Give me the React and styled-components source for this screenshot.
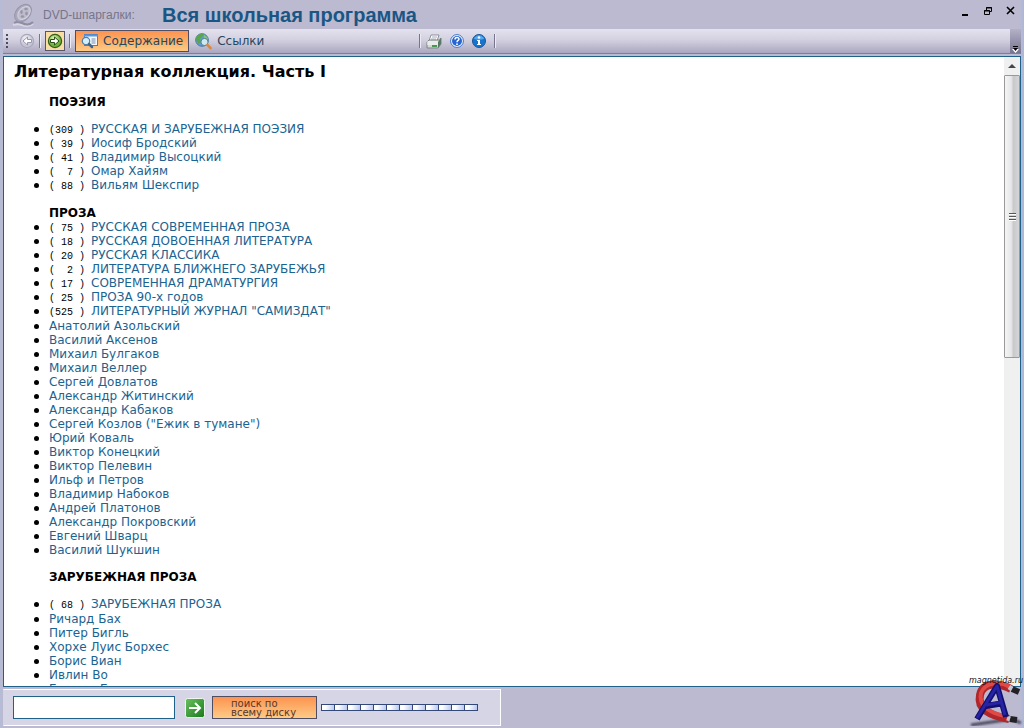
import React from 'react';
import styled, { createGlobalStyle } from 'styled-components';

const GlobalStyle = createGlobalStyle`
  * { box-sizing: border-box; }
  body { margin: 0; background: #bcbad0; }
  button, input { font: inherit; margin: 0; }
`;

const Shell = styled.div`
  display: flex;
  flex-direction: column;
  height: 100vh;
  padding: 0 3px 2px;
  overflow: hidden;
  position: relative;
  background: linear-gradient(90deg, #b4bcd6 0, #bcbad0 4px, #bcbad0 calc(100% - 4px), #a9b8dc 100%);
`;

const TitleBar = styled.header`
  display: flex;
  align-items: center;
  flex: none;
  height: 29px;
  padding: 0 4px 0 8px;
  font-family: "Liberation Sans", Arial, sans-serif;
`;

const Product = styled.span`
  width: 127px;
  padding-left: 8px;
  font-size: 12px;
  color: #77758a;
  white-space: nowrap;
`;

const Title = styled.h1`
  flex: 1;
  margin: 0;
  font-size: 20px;
  line-height: 28px;
  color: #1a5684;
`;

const WindowButtons = styled.div`
  display: flex;
  gap: 12px;
  padding-bottom: 8px;
`;

const PlainButton = styled.button`
  display: flex;
  align-items: center;
  justify-content: center;
  flex: none;
  padding: 0;
  border: 0;
  background: none;
`;

const ToolBar = styled.nav`
  display: flex;
  flex: none;
  height: 25px;
  border-bottom: 1px solid #7f7d9c;
  background: linear-gradient(#e4e2ee, #d3d1e0 45%, #aaa6c0);
  font-family: "DejaVu Sans", Verdana, sans-serif;
`;

const ToolGroup = styled.div`
  display: flex;
  align-items: center;
  width: ${(p) => p.$width || 'auto'};
  gap: ${(p) => p.$gap || '0'};
  flex: ${(p) => (p.$fill ? '1' : 'none')};
`;

const Grip = styled.span`
  width: 2px;
  height: 15px;
  margin: 0 11px 0 3px;
  background: repeating-linear-gradient(#4c4a62 0 2px, transparent 2px 4px);
`;

const Divider = styled.span`
  width: 2px;
  height: 14px;
  border-left: 1px solid #77758e;
  border-right: 1px solid #eceaf4;
`;

const Forward = styled(PlainButton)`
  width: 20px;
  height: 20px;
  border: 1px solid #57566c;
  background: #f8dda4;
`;

const TabButton = styled.button`
  display: flex;
  align-items: center;
  gap: 5px;
  height: 22px;
  padding: 0 5px;
  border: 1px solid ${(p) => (p.$active ? '#4f4d62' : 'transparent')};
  background: ${(p) => (p.$active ? 'linear-gradient(#fd9350, #fdae67 50%, #fecb86)' : 'none')};
  color: #25475f;
  font-size: 12px;
  line-height: 20px;
  white-space: nowrap;
`;

const Overflow = styled(PlainButton)`
  align-items: flex-end;
  width: 11px;
  background: linear-gradient(#b3b0c8, #77748f);
`;

const Panel = styled.main`
  display: flex;
  flex: 1;
  min-height: 0;
  margin-top: 2px;
  border: 1px solid #1f6189;
  background: #fff;
`;

const Content = styled.div`
  flex: 1;
  overflow: hidden;
  padding: 5px 10px 0;
  font-family: "DejaVu Sans", Verdana, sans-serif;
  font-size: 12px;
  line-height: 14px;
  color: #000;
`;

const PageHeading = styled.h2`
  margin: 0;
  font-size: 16px;
  line-height: 20px;
`;

const SectionHeading = styled.h3`
  margin: ${(p) => (p.$tight ? '14px 0 0 35px' : '13px 0 13px 35px')};
  font-size: 12px;
  line-height: 14px;
`;

const List = styled.ul`
  margin: 0;
  padding: 0 0 0 19px;
  list-style: none;
`;

const Item = styled.li`
  display: flex;
  align-items: center;
  height: 14px;
  margin-bottom: ${(p) => (p.$last ? '1px' : '0')};
  white-space: pre;

  &::before {
    content: "";
    width: 5px;
    height: 5px;
    margin: 0 10px 0 1px;
    border-radius: 50%;
    background: #000;
  }
`;

const Count = styled.span`
  padding-top: 3px;
  font: 10px/11px "Liberation Mono", "Courier New", monospace;
`;

const Link = styled.a`
  color: #1b6391;
  text-decoration: none;
`;

const ScrollTrack = styled.div`
  display: flex;
  flex-direction: column;
  flex: none;
  width: 16px;
  background: #f0f0f0;
`;

const ScrollUp = styled(PlainButton)`
  height: 18px;
`;

const Thumb = styled.div`
  display: flex;
  align-items: center;
  justify-content: center;
  height: 45%;
  border: 1px solid #999;
  border-radius: 1px;
  background: linear-gradient(90deg, #f5f5f5, #e6e6e8 45%, #c9c9cd 60%, #d6d6d8);
`;

const ThumbGrip = styled.span`
  width: 7px;
  height: 8px;
  background: repeating-linear-gradient(#55555a 0 1px, #fff 1px 2px, #d2d2d4 2px 3px);
`;

const Footer = styled.footer`
  flex: none;
  height: 39px;
  padding-top: 2px;
`;

const SearchBar = styled.form`
  display: flex;
  align-items: center;
  width: 498px;
  max-width: 100%;
  height: 37px;
  padding: 0 9px;
  border: 1px solid #fff;
  border-left-color: #d5d5e4;
  background: #d5d5e5;
`;

const SearchInput = styled.input`
  width: 162px;
  height: 23px;
  padding: 0 4px;
  border: 1px solid #1f6189;
  background: #fff;
  font: 12px "DejaVu Sans", sans-serif;
`;

const Go = styled(PlainButton)`
  margin: 0 7px 0 10px;
`;

const DiskButton = styled.button`
  width: 105px;
  height: 23px;
  padding: 0 0 0 18px;
  border: 1px solid #4f4d62;
  background: linear-gradient(#fd9350, #fecb86);
  color: #54382e;
  font: 10px/9px "DejaVu Sans", Verdana, sans-serif;
  text-align: left;
  white-space: nowrap;
`;

const Progress = styled.div`
  display: flex;
  margin-left: 4px;
  border: 1px solid #34487a;
  border-right: 0;
`;

const Cell = styled.span`
  width: 13px;
  height: 5px;
  border-right: 1px solid #34487a;
  background: linear-gradient(100deg, #fff 30%, #b7c8f0);
`;

const Watermark = styled.svg`
  position: absolute;
  right: 0;
  bottom: 0;
`;

const poetry = [
  ['(309 ) ', 'РУССКАЯ И ЗАРУБЕЖНАЯ ПОЭЗИЯ'],
  ['( 39 ) ', 'Иосиф Бродский'],
  ['( 41 ) ', 'Владимир Высоцкий'],
  ['(  7 ) ', 'Омар Хайям'],
  ['( 88 ) ', 'Вильям Шекспир'],
];

const prose = [
  ['( 75 ) ', 'РУССКАЯ СОВРЕМЕННАЯ ПРОЗА'],
  ['( 18 ) ', 'РУССКАЯ ДОВОЕННАЯ ЛИТЕРАТУРА'],
  ['( 20 ) ', 'РУССКАЯ КЛАССИКА'],
  ['(  2 ) ', 'ЛИТЕРАТУРА БЛИЖНЕГО ЗАРУБЕЖЬЯ'],
  ['( 17 ) ', 'СОВРЕМЕННАЯ ДРАМАТУРГИЯ'],
  ['( 25 ) ', 'ПРОЗА 90-х годов'],
  ['(525 ) ', 'ЛИТЕРАТУРНЫЙ ЖУРНАЛ "САМИЗДАТ"'],
  ...[
    'Анатолий Азольский', 'Василий Аксенов', 'Михаил Булгаков', 'Михаил Веллер',
    'Сергей Довлатов', 'Александр Житинский', 'Александр Кабаков',
    'Сергей Козлов ("Ежик в тумане")', 'Юрий Коваль', 'Виктор Конецкий',
    'Виктор Пелевин', 'Ильф и Петров', 'Владимир Набоков', 'Андрей Платонов',
    'Александр Покровский', 'Евгений Шварц', 'Василий Шукшин',
  ].map((name) => [null, name]),
];

const foreign = [
  ['( 68 ) ', 'ЗАРУБЕЖНАЯ ПРОЗА'],
  [null, 'Ричард Бах'],
  [null, 'Питер Бигль'],
  [null, 'Хорхе Луис Борхес'],
  [null, 'Борис Виан'],
  [null, 'Ивлин Во'],
  [null, 'Гюнтер Грасс'],
];

function Entries({ items }) {
  return (
    <List>
      {items.map(([count, name], i) => (
        <Item key={name} $last={Boolean(count && items[i + 1] && !items[i + 1][0])}>
          {count && <Count>{count}</Count>}
          <Link href="#">{name}</Link>
        </Item>
      ))}
    </List>
  );
}

function ReelLogo() {
  return (
    <svg width="24" height="24" viewBox="0 0 24 24" fill="none">
      <path d="M2 22c4-1 6-1 9 0s7 2 11-1" stroke="#d8d6e4" strokeWidth="2" />
      <path d="M3 20c3-2 5-1 8 0 4 2 8 2 11-1" stroke="#8f8da2" strokeWidth="2" />
      <ellipse cx="12" cy="10" rx="10" ry="7" transform="rotate(-48 12 10)" fill="#aaa8bc" stroke="#9694a9" />
      <ellipse cx="13" cy="10" rx="7.500" ry="5" transform="rotate(-48 13 10)" fill="#bfbdcd" stroke="#d3d1de" />
      <ellipse cx="15" cy="6" rx="1.800" ry="1.300" fill="#9795aa" />
      <ellipse cx="10.500" cy="9" rx="1.300" ry="2" fill="#9795aa" />
      <ellipse cx="15.500" cy="10.500" rx="1.300" ry="2" fill="#9795aa" />
      <ellipse cx="11.500" cy="13.500" rx="1.800" ry="1.300" fill="#9795aa" />
    </svg>
  );
}

function RoundArrow({ forward }) {
  const id = forward ? 'forward-fill' : 'back-fill';
  return (
    <svg width="16" height="16" viewBox="0 0 16 16">
      <defs>
        <radialGradient id={id} cx=".4" cy=".3">
          <stop offset="0" stopColor={forward ? '#e2f7b7' : '#f4f3f9'} />
          <stop offset="1" stopColor={forward ? '#73b13c' : '#c8c6d7'} />
        </radialGradient>
      </defs>
      <circle cx="8" cy="8" r="6.600" fill={`url(#${id})`} stroke={forward ? '#315e18' : '#aaa8bb'} strokeWidth="1.200" />
      <path
        d={forward ? 'M3.500 6.500h4V4l4.500 4-4.500 4V9.500h-4z' : 'M12.500 6.500h-4V4L4 8l4.500 4V9.500h4z'}
        fill="#fff"
        stroke={forward ? '#284d16' : '#9997ad'}
      />
    </svg>
  );
}

function ContentsIcon() {
  return (
    <svg width="17" height="16" viewBox="0 0 17 16">
      <rect x="3.500" y="1.500" width="13" height="11" fill="#f5f9ff" stroke="#4c7dba" />
      <path d="M3 2.500h14" stroke="#5996de" strokeWidth="2" />
      <path d="M10.500 6h4M10.500 8h4M10.500 10h4" stroke="#6e8cad" />
      <circle cx="5" cy="8" r="3.700" fill="#d2effb" stroke="#507fa7" strokeWidth="1.200" />
      <path d="m8 11 3 3" stroke="#3f6590" strokeWidth="2.500" strokeLinecap="round" />
    </svg>
  );
}

function GlobeIcon() {
  return (
    <svg width="17" height="17" viewBox="0 0 17 17">
      <circle cx="7" cy="7" r="6.300" fill="#5b9fd6" stroke="#47799e" />
      <path d="M2 3c2-2 5-3 7-2L7 4 5 6l1 3-2 2C2 9 1 7 1 5z" fill="#5aa64b" />
      <path d="M9 2c3 1 4 3 4 5l-2 1-2-2z" fill="#8cc565" />
      <circle cx="9.500" cy="9" r="3.600" fill="#d8effb" fillOpacity=".9" stroke="#557b99" />
      <path d="m12.500 12 3 3" stroke="#d98a3c" strokeWidth="2.600" strokeLinecap="round" />
    </svg>
  );
}

function PrinterIcon() {
  return (
    <svg width="16" height="15" viewBox="0 0 16 15">
      <path d="M5 1h8l-2 6H3z" fill="#fff" stroke="#777b84" strokeWidth=".8" />
      <path d="M6 3h5M5 5h5" stroke="#aab" />
      <path d="m1 8 2-2h11l1-2v6l-3 4H1z" fill="#d5d9d6" stroke="#7b8581" />
      <path d="M12 8v6l3-4V4z" fill="#577966" />
      <path d="M1 8h11M1 10h11" stroke="#fff" />
      <path d="M6 12h5" stroke="#459852" strokeWidth="2" />
    </svg>
  );
}

function HelpIcon() {
  return (
    <svg width="14" height="14" viewBox="0 0 14 14" fill="none">
      <circle cx="7" cy="7" r="6.400" fill="#fff" stroke="#3d6fc9" />
      <circle cx="7" cy="7" r="5" fill="#2766d2" />
      <path d="M5 5.500C5 2.800 9.300 3 9 5.300 8.900 6.500 7 6.500 7 8.200" stroke="#fff" strokeWidth="1.500" />
      <circle cx="7" cy="10.200" r=".9" fill="#fff" />
    </svg>
  );
}

function InfoIcon() {
  return (
    <svg width="14" height="14" viewBox="0 0 14 14">
      <circle cx="7" cy="7" r="6.500" fill="#1674cd" stroke="#1b5797" />
      <path d="M2 5c2-5 8-5 10 0-3 1-7 1-10 0" fill="#55a9ee" />
      <circle cx="7" cy="3.500" r="1.200" fill="#fff" />
      <path d="M5 6h3v4h1v1H5v-1h1V7H5z" fill="#fff" />
    </svg>
  );
}

function MagnetMark() {
  return (
    <Watermark width="56" height="56" viewBox="0 0 56 56" fill="none">
      <defs>
        <filter id="shadow-blur"><feGaussianBlur stdDeviation="1.2" /></filter>
      </defs>
      <path d="M3 53 44 47l9 4" stroke="#48465a" strokeWidth="3" filter="url(#shadow-blur)" />
      <path d="M43 17C32 11 15 9 12 23c-3 14 10 21 29 24" stroke="#b0262b" strokeWidth="8" />
      <path d="M42 15C32 9 17 10 13 21c-3 13 9 20 24 23" stroke="#e04a46" strokeWidth="4" />
      <path d="m44 17 7 3" stroke="#222126" strokeWidth="6" />
      <path d="m42 47 7 1" stroke="#222126" strokeWidth="6" />
      <path d="m41 15 3 2M39 46l3 1" stroke="#c7c5cc" strokeWidth="5" />
      <path d="M9 47 29 14l9 31M18 34l18-3" stroke="#11106d" strokeWidth="6" strokeLinejoin="round" />
      <path d="M9 46 29 14l8 29M18 33l17-3" stroke="#2722a6" strokeWidth="3" strokeLinejoin="round" />
      <text x="1" y="11" fill="#111" fontFamily="DejaVu Sans, sans-serif" fontSize="8" fontStyle="italic">magnetida.ru</text>
    </Watermark>
  );
}

export default function App() {
  return (
    <Shell>
      <GlobalStyle />
      <TitleBar>
        <ReelLogo />
        <Product>DVD-шпаргалки:</Product>
        <Title>Вся школьная программа</Title>
        <WindowButtons>
          <PlainButton aria-label="Свернуть">
            <svg width="12" height="10"><path d="M3 9h6" stroke="#000" strokeWidth="2" /></svg>
          </PlainButton>
          <PlainButton aria-label="Восстановить">
            <svg width="10" height="10" fill="none" stroke="#000">
              <path d="M3.500 4V1.500h5v4H7M3 2h6" />
              <path d="M1.500 4.500h5v4h-5zM1 5h6" />
            </svg>
          </PlainButton>
          <PlainButton aria-label="Закрыть">
            <svg width="12" height="10"><path d="m2 1 7 7M9 1 2 8" stroke="#000" strokeWidth="1.600" /></svg>
          </PlainButton>
        </WindowButtons>
      </TitleBar>

      <ToolBar>
        <ToolGroup $width="416px">
          <Grip />
          <ToolGroup $gap="4px">
            <PlainButton aria-label="Назад"><RoundArrow /></PlainButton>
            <Divider />
            <Forward aria-label="Вперёд"><RoundArrow forward /></Forward>
            <Divider />
            <TabButton $active><ContentsIcon />Содержание</TabButton>
          </ToolGroup>
          <TabButton><GlobeIcon />Ссылки</TabButton>
        </ToolGroup>
        <ToolGroup $gap="5px" $fill>
          <Divider />
          <ToolGroup $gap="8px">
            <PlainButton aria-label="Печать"><PrinterIcon /></PlainButton>
            <PlainButton aria-label="Помощь"><HelpIcon /></PlainButton>
            <PlainButton aria-label="О программе"><InfoIcon /></PlainButton>
            <Divider />
          </ToolGroup>
        </ToolGroup>
        <Overflow aria-label="Ещё">
          <svg width="7" height="8"><path d="M1 1.500h5" stroke="#000" /><path d="M0 4h7L3.500 8z" fill="#fff" /><path d="M1 3h5L3.500 6z" fill="#000" /></svg>
        </Overflow>
      </ToolBar>

      <Panel>
        <Content>
          <PageHeading>Литературная коллекция. Часть I</PageHeading>
          <SectionHeading>ПОЭЗИЯ</SectionHeading>
          <Entries items={poetry} />
          <SectionHeading $tight>ПРОЗА</SectionHeading>
          <Entries items={prose} />
          <SectionHeading>ЗАРУБЕЖНАЯ ПРОЗА</SectionHeading>
          <Entries items={foreign} />
        </Content>
        <ScrollTrack>
          <ScrollUp aria-label="Прокрутить вверх">
            <svg width="8" height="4"><path d="m0 4 4-4 4 4z" fill="#44444a" /></svg>
          </ScrollUp>
          <Thumb><ThumbGrip /></Thumb>
        </ScrollTrack>
      </Panel>

      <Footer>
        <SearchBar onSubmit={(e) => e.preventDefault()}>
          <SearchInput type="text" aria-label="Поиск" />
          <Go type="submit" aria-label="Найти">
            <svg width="20" height="20" viewBox="0 0 20 20" fill="none">
              <defs>
                <linearGradient id="go-fill" x2="1" y2="1">
                  <stop stopColor="#6cc05e" /><stop offset="1" stopColor="#187a1c" />
                </linearGradient>
              </defs>
              <rect x=".5" y=".5" width="19" height="19" rx="2" fill="url(#go-fill)" stroke="#eef5ee" />
              <path d="M4 10h11M10 5l5 5-5 5" stroke="#fff" strokeWidth="2" />
            </svg>
          </Go>
          <DiskButton type="button">поиск по<br />всему диску</DiskButton>
          <Progress>
            {Array.from({ length: 12 }, (_, i) => <Cell key={i} />)}
          </Progress>
        </SearchBar>
      </Footer>
      <MagnetMark />
    </Shell>
  );
}
